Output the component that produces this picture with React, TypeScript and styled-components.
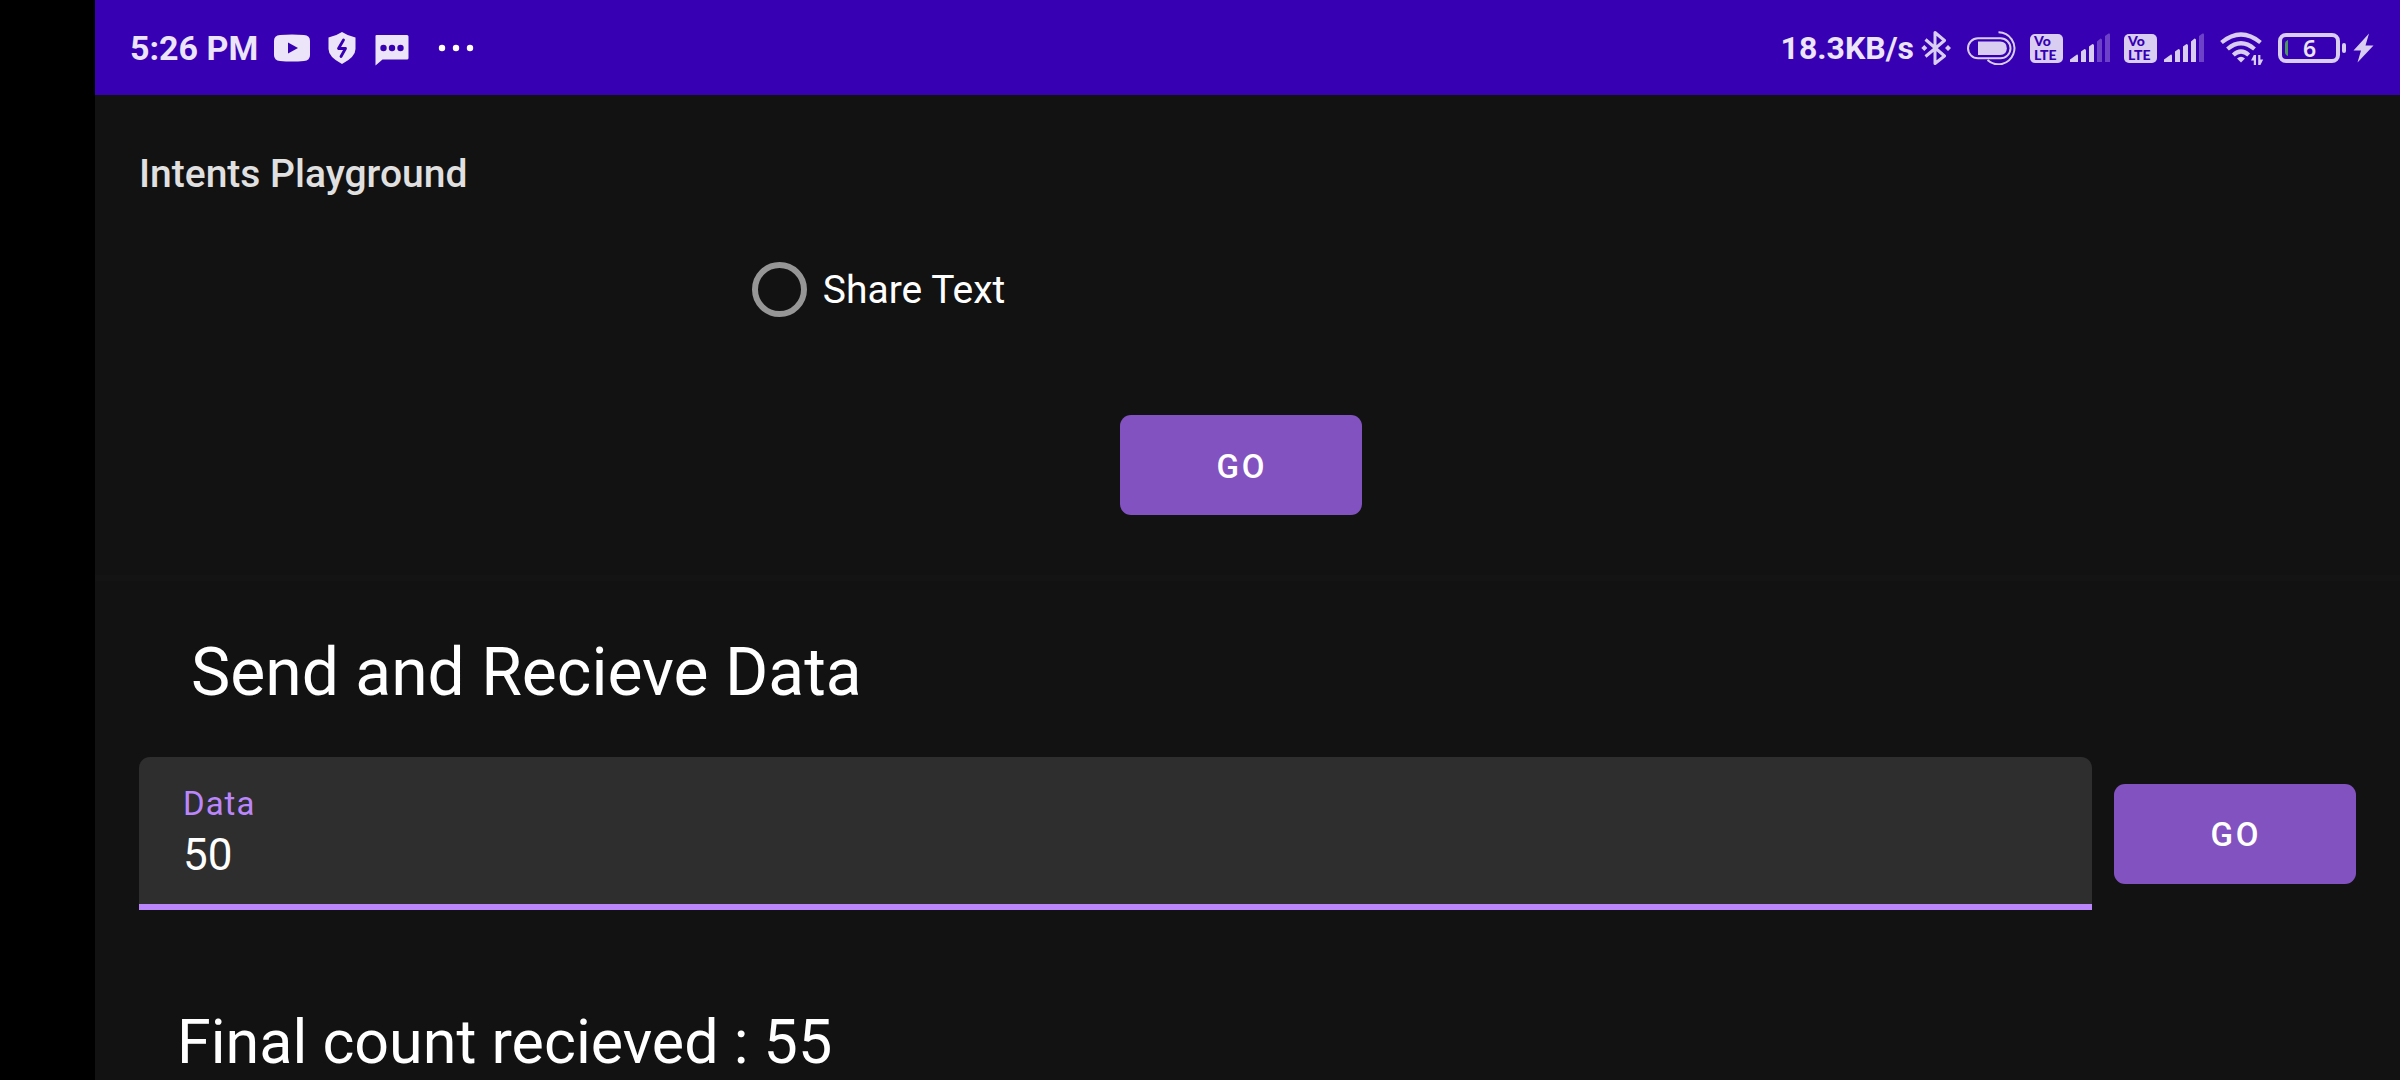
import React, { useState } from 'react';
import styled, { createGlobalStyle } from 'styled-components';

const GlobalStyle = createGlobalStyle`
  *, *::before, *::after { box-sizing: border-box; }
  body {
    margin: 0;
    background: #000;
    color: #fff;
    font-family: Roboto, "Noto Sans", sans-serif;
    overflow: hidden;
  }
  button, input { font-family: inherit; }
`;

const Device = styled.div`
  display: flex;
  flex-direction: column;
  height: 100vh;
  padding-left: 95px;
  overflow: hidden;
`;

const StatusBar = styled.header`
  display: flex;
  flex: none;
  align-items: center;
  justify-content: space-between;
  height: 95px;
  padding: 0 26px 0 35px;
  background: #3700b3;
`;

const StatusGroup = styled.div<{ $gap?: number }>`
  display: flex;
  align-items: center;
  gap: ${(p) => p.$gap ?? 14}px;
`;

const StatusText = styled.span<{ $size: number }>`
  font-size: ${(p) => p.$size}px;
  line-height: 40px;
  font-weight: 700;
  color: #ece4f9;
  white-space: nowrap;
`;

const Icon = styled.svg`
  display: block;
  flex: none;
`;

const More = styled(Icon)`
  margin-left: 14px;
`;

const Main = styled.main`
  display: flex;
  flex: 1;
  flex-direction: column;
  min-height: 0;
  background: #121212;
`;

const Card = styled.section`
  display: flex;
  flex: none;
  flex-direction: column;
  padding: 56px 13px 60px 0;
  border-bottom: 6px solid #141414;
`;

const AppTitle = styled.h1`
  margin: 0;
  padding-left: 44px;
  font-size: 39px;
  line-height: 46px;
  font-weight: 500;
  color: #e0e0e0;
`;

const Options = styled.div`
  display: grid;
  grid-template-columns: 2fr 5fr;
  margin-top: 60px;
`;

const Option = styled.label`
  display: flex;
  grid-column: 2;
  align-items: center;
  gap: 16px;
  justify-self: start;
  padding-left: 2px;
  font-size: 39px;
  line-height: 64px;
`;

const OptionText = styled.span`
  padding-top: 2px;
  line-height: 62px;
`;

const Radio = styled.input`
  appearance: none;
  width: 55px;
  height: 55px;
  margin: 0;
  border: 6px solid #969696;
  border-radius: 50%;

  &:checked {
    border-color: #bb86fc;
    background: radial-gradient(#bb86fc 50%, transparent 54%);
  }
`;

const Button = styled.button`
  flex: none;
  width: 242px;
  height: 100px;
  padding: 2px 0 0 2px;
  border: 0;
  border-radius: 11px;
  background: #8352c1;
  color: #fff;
  font-size: 33px;
  font-weight: 500;
  letter-spacing: 3px;
  text-transform: uppercase;
`;

const Action = styled.div`
  display: flex;
  justify-content: center;
  margin-top: 94px;
`;

const DataSection = styled.section`
  display: flex;
  flex: none;
  flex-direction: column;
  padding: 53px 44px 0;
`;

const SectionTitle = styled.h2`
  margin: 0;
  padding-left: 52px;
  font-size: 66px;
  line-height: 78px;
  font-weight: 400;
`;

const FieldRow = styled.form`
  display: flex;
  align-items: center;
  gap: 22px;
  margin-top: 45px;
`;

const Field = styled.label`
  display: flex;
  flex: 1;
  flex-direction: column;
  min-width: 0;
  height: 153px;
  padding: 27px 44px 0;
  border-bottom: 6px solid #bb86fc;
  border-radius: 11px 11px 0 0;
  background: #2e2e2e;
`;

const FieldLabel = styled.span`
  font-size: 33px;
  line-height: 40px;
  letter-spacing: 1px;
  color: #bb86fc;
`;

const FieldInput = styled.input`
  width: 100%;
  height: 62px;
  padding: 0;
  border: 0;
  outline: 0;
  background: transparent;
  color: #fff;
  font-size: 44px;
`;

const Result = styled.p`
  margin: 96px 0 0;
  padding-left: 38px;
  font-size: 61px;
  line-height: 72px;
  white-space: nowrap;
`;

const LIGHT = '#ece4f9';
const SOFT = '#d9cdf2';
const BAR = '#3700b3';

const VideoIcon = () => (
  <Icon width="36" height="34" viewBox="0 0 36 34" aria-hidden="true">
    <path d="M6 4Q18 3 30 4Q36 4.500 36 10V24Q36 29.500 30 30Q18 31 6 30Q0 29.500 0 24V10Q0 4.500 6 4Z" fill={LIGHT} />
    <path d="M14 11.500L24 17L14 22.500Z" fill={BAR} />
  </Icon>
);

const ShieldIcon = () => (
  <Icon width="36" height="34" viewBox="0 0 36 34" aria-hidden="true">
    <path d="M18 1Q24 5 31.500 6.500V18Q31.500 26 18 33Q4.500 26 4.500 18V6.500Q12 5 18 1Z" fill={LIGHT} />
    <path d="M19.500 9L14.500 17.500H21.500L17 25.500" fill="none" stroke={BAR} strokeWidth="2.800" strokeLinecap="round" strokeLinejoin="round" />
  </Icon>
);

const MessageIcon = () => (
  <Icon width="36" height="36" viewBox="0 -1 36 36" aria-hidden="true">
    <path d="M2.500 4H33Q34.500 4 34.500 5.500V27Q34.500 28.500 33 28.500H8.500L1.500 34.500V5Q1.500 4 2.500 4Z" fill={LIGHT} />
    <circle cx="9.500" cy="17" r="3.200" fill={BAR} />
    <circle cx="18" cy="17" r="3.200" fill={BAR} />
    <circle cx="26.500" cy="17" r="3.200" fill={BAR} />
  </Icon>
);

const MoreIcon = () => (
  <More width="36" height="34" viewBox="0 0 36 34" aria-hidden="true">
    <circle cx="4" cy="17" r="3.200" fill="#fff" />
    <circle cx="18" cy="17" r="3.200" fill="#fff" />
    <circle cx="32" cy="17" r="3.200" fill="#fff" />
  </More>
);

const BluetoothIcon = () => (
  <Icon width="32" height="34" viewBox="0 0 32 34" aria-hidden="true">
    <path d="M5.500 8.500L24.500 25L15 32.500V1.500L24.500 9.500L5.500 25.500" fill="none" stroke={SOFT} strokeWidth="3" strokeLinejoin="round" />
    <path d="M4.300 14L7.300 17L4.300 20L1.300 17ZM28 14L31 17L28 20L25 17Z" fill={SOFT} />
  </Icon>
);

const PillIcon = () => (
  <Icon width="50" height="34" viewBox="0 0 50 34" aria-hidden="true">
    <rect x="2" y="7.300" width="42.500" height="20" rx="10" fill="none" stroke={SOFT} strokeWidth="2" />
    <path d="M12 10.500H34Q40.800 10.500 40.800 17.300Q40.800 24 34 24H12Z" fill={SOFT} />
    <path d="M32.500 1.300A16 16 0 1 1 21.500 29" fill="none" stroke={SOFT} strokeWidth="2" />
  </Icon>
);

const SignalIcon = ({ level }: { level: number }) => {
  const bars = [
    'M0 29V26.500L7 21.500Q8 21.500 8 22.500V29Z',
    'M11 29V18.500L14.500 16Q16 16 16 17.500V29Z',
    'M19 29V13.500L22.500 11Q24 11 24 12.500V29Z',
    'M27 29V8.500L30.500 5.500Q32 5.500 32 7V29Z',
    'M35 29V3L38.500 0.500Q40 0 40 1.500V29Z',
  ];
  return (
    <Icon width="80" height="30" viewBox="0 0 80 30" aria-label="VoLTE signal">
      <rect x="0" y="1" width="33" height="29" rx="5" fill={SOFT} />
      <text x="4" y="13" fontSize="14" fontWeight="900" fontFamily="Lato, sans-serif" fill={BAR}>Vo</text>
      <text x="4" y="27" fontSize="14" fontWeight="900" fontFamily="Lato, sans-serif" fill={BAR}>LTE</text>
      <g transform="translate(40 0)">
        {bars.map((d, i) => (
          <path key={d} d={d} fill={i < level ? SOFT : '#6d42c8'} />
        ))}
      </g>
    </Icon>
  );
};

const WifiIcon = () => (
  <Icon width="46" height="34" viewBox="0 0 46 34" aria-hidden="true">
    <g fill="none" stroke={SOFT} strokeWidth="4.200">
      <path d="M3.500 11.500Q23 -4.500 42.500 11.500" />
      <path d="M9.500 18Q23 6.500 36.500 18" />
      <path d="M15.300 24Q23 17 30.700 24" />
    </g>
    <path d="M19 27.500Q23 24 27 27.500L23 31.500Z" fill={SOFT} />
    <path d="M38 24V34H35.800V29.500H33L35.800 24ZM40.200 34V24H42.400V28.500H45.200L42.400 34Z" fill={SOFT} />
  </Icon>
);

const BatteryIcon = () => (
  <Icon width="96" height="30" viewBox="0 0 96 30" aria-label="Battery 6%, charging">
    <rect x="2" y="2" width="58" height="26" rx="6" fill="none" stroke={SOFT} strokeWidth="4" />
    <path d="M10 7V23Q7 22 7 19V11Q7 8 10 7Z" fill="#4c9a5b" />
    <rect x="64" y="10" width="4" height="10" rx="2" fill={SOFT} />
    <text x="31.500" y="24" textAnchor="middle" fontSize="23" fontWeight="600" fontFamily="Noto Sans, sans-serif" fill={LIGHT}>6</text>
    <path d="M91 0.500L75.500 17.500H83L79.500 29.500L95.500 12.500H87.500Z" fill={SOFT} />
  </Icon>
);

export default function App() {
  const [data, setData] = useState('50');

  return (
    <>
      <GlobalStyle />
      <Device>
        <StatusBar>
          <StatusGroup $gap={16}>
            <StatusText $size={34}>5:26 PM</StatusText>
            <StatusGroup>
              <VideoIcon />
              <ShieldIcon />
              <MessageIcon />
              <MoreIcon />
            </StatusGroup>
          </StatusGroup>
          <StatusGroup>
            <StatusGroup $gap={6}>
              <StatusText $size={32}>18.3KB/s</StatusText>
              <BluetoothIcon />
            </StatusGroup>
            <PillIcon />
            <SignalIcon level={3} />
            <SignalIcon level={4} />
            <WifiIcon />
            <BatteryIcon />
          </StatusGroup>
        </StatusBar>
        <Main>
          <Card>
            <AppTitle>Intents Playground</AppTitle>
            <Options>
              <Option>
                <Radio type="radio" name="intent" value="share" />
                <OptionText>Share Text</OptionText>
              </Option>
            </Options>
            <Action>
              <Button type="button">Go</Button>
            </Action>
          </Card>
          <DataSection>
            <SectionTitle>Send and Recieve Data</SectionTitle>
            <FieldRow onSubmit={(e) => e.preventDefault()}>
              <Field>
                <FieldLabel>Data</FieldLabel>
                <FieldInput value={data} inputMode="numeric" onChange={(e) => setData(e.target.value)} />
              </Field>
              <Button type="submit">Go</Button>
            </FieldRow>
            <Result>Final count recieved : 55</Result>
          </DataSection>
        </Main>
      </Device>
    </>
  );
}
